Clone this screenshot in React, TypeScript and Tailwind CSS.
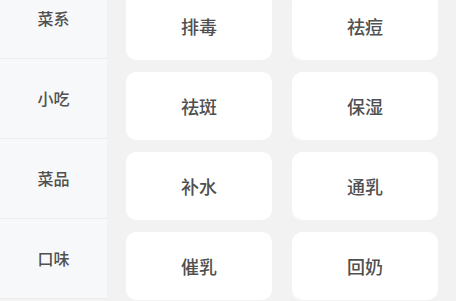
import React from "react";

const side = ["菜系", "小吃", "菜品", "口味"];
const items = ["排毒", "祛痘", "祛斑", "保湿", "补水", "通乳", "催乳", "回奶"];

export default function App() {
  return (
    <div
      className="flex h-[301px] w-[456px] overflow-hidden bg-[#f2f2f2]"
      style={{ fontFamily: '"Noto Sans CJK SC", "Noto Sans", sans-serif' }}
    >
      <div className="w-[107px] shrink-0 self-start bg-[#f7f8fa] mt-[-21px] flex flex-col">
        {side.map((s) => (
          <div
            key={s}
            className="h-[80px] flex items-center justify-center border-b border-[#ececee] text-[16px] font-medium text-[#505050]"
          >
            <span className="-mt-[2px]">{s}</span>
          </div>
        ))}
      </div>
      <div className="flex-1 pl-[19px] pr-[18px]">
        <div className="grid grid-cols-2 gap-x-[20px] gap-y-[12px] mt-[-8px]">
          {items.map((t) => (
            <div
              key={t}
              className="h-[68px] rounded-[10px] bg-white flex items-center justify-center text-[18px] font-medium text-[#505050]"
            >
              {t}
            </div>
          ))}
        </div>
      </div>
    </div>
  );
}
